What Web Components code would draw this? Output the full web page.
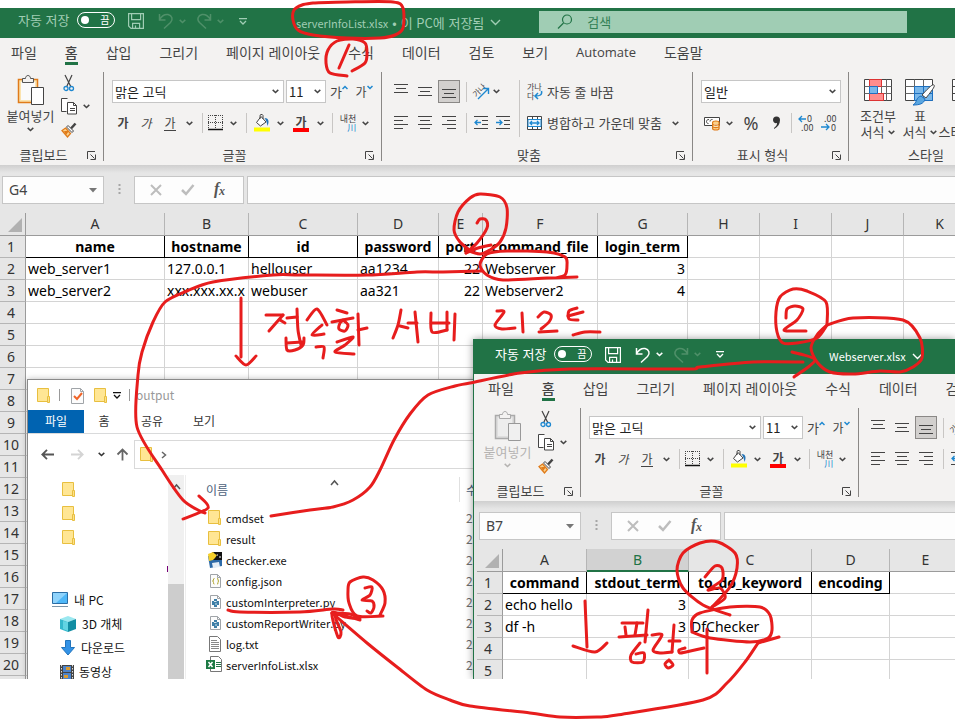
<!DOCTYPE html>
<html lang="ko">
<head>
<meta charset="utf-8">
<title>serverInfoList.xlsx</title>
<style>
html,body{margin:0;height:100%;background:#fff;overflow:hidden}
body{font:13px/16px "Noto Sans CJK KR","Noto Sans",sans-serif;color:#444}
</style>
</head>
<body>
<desk-stage>
  <excel-window inactive cell="G4" file="serverInfoList.xlsx" note="이 PC에 저장됨" search>
    <sheet-grid cols="139,84,109,81,44,115,90,72,72,72,72" rows="20" tail headed="7" data='[["name","hostname","id","password","port","command_file","login_term"],["web_server1","127.0.0.1","hellouser","aa1234",22,"Webserver",3],["web_server2","xxx.xxx.xx.x","webuser","aa321",22,"Webserver2",4]]'></sheet-grid>
  </excel-window>
  <file-explorer slot="explorer"></file-explorer>
  <excel-window slot="front" floating cell="B7" file="Webserver.xlsx">
    <sheet-grid cols="84,102,123,78,72,72" rows="5" headed="4" active="B" data='[["command","stdout_term","to_do_keyword","encoding"],["echo hello",3,"",""],["df -h",3,"DfChecker",""]]'></sheet-grid>
  </excel-window>
  <ink-layer slot="ink"></ink-layer>
</desk-stage>

<script>
const K = '#444', B = '#1e88d0';
const lines = (a) => a.map(([x1, x2, y]) => `<path d="M${x1} ${y}.5H${x2}" stroke="${K}"/>`).join('');
const FOLDER = '<path fill="#ffe694" stroke="#e8bf3f" d="M1.500 1.500h11v13h-11z"/><path fill="#fce08a" stroke="#e8bf3f" d="M11.500 9.500h2v6h-2z"/>';
const PAGE = '<path fill="#fcfcfc" stroke="#a0a4a8" d="M3.500 1.500h7l3 3v10h-10z"/><path fill="none" stroke="#a0a4a8" d="M10.500 1.500v3h3"/>';
const ICONS = {
  save: [16, 16, '<path fill="none" stroke="currentColor" stroke-width="1.200" d="M.6.6h14.800v14.800H3L.6 13zM3.600.6v6h9v-6M4.600 15.400v-5h7v5M7.500 15v-2.500"/>'],
  undo: [16, 16, '<path fill="none" stroke="currentColor" stroke-width="1.500" d="M1.500 1v6h6M1.500 6.500C4 2.500 7 1 10 1.500c4 1 5.500 5 2.500 8L6 15.500"/>'],
  redo: [16, 16, '<path fill="none" stroke="currentColor" stroke-width="1.500" d="M14.500 1v6h-6M14.500 6.500C12 2.500 9 1 6 1.500c-4 1-5.500 5-2.500 8L10 15.500"/>'],
  chev: [7, 5, '<path fill="none" stroke="currentColor" stroke-width="1.500" d="M.7.9l2.800 2.600L6.300.9"/>'],
  bigchev: [11, 7, '<path fill="none" stroke="currentColor" stroke-width="1.400" d="M1 1l4.500 4.500L10 1"/>'],
  more: [8, 7, '<path fill="none" stroke="currentColor" stroke-width="1.300" d="M0 .7h8M1 3l3 3 3-3"/>'],
  search: [16, 16, '<g fill="none" stroke="#217346" stroke-width="1.200"><circle cx="10" cy="5.500" r="4.500"/><path d="M6.500 9L1 14.500"/></g>'],
  paste: [28, 30, '<path d="M1.500 4.500h19v23h-19z" fill="#fbe3ae" stroke="#e07b1a" stroke-width="1.500"/><path fill="#fafafa" d="M4 7h14v18H4z"/><path fill="#f3f2f1" stroke="#555" d="M5.500 7.500v-4h3c0-4 5-4 5 0h3v4z"/><path fill="#fff" stroke="#444" d="M14.500 12.500h12v17h-12z"/>'],
  pastegray: [28, 30, '<path d="M1.500 4.500h19v23h-19z" fill="#dedede" stroke="#aaa" stroke-width="1.500"/><path fill="#ededed" d="M4 7h14v18H4z"/><path fill="#f3f2f1" stroke="#aaa" d="M5.500 7.500v-4h3c0-4 5-4 5 0h3v4z"/><path fill="#f0f0f0" stroke="#999" d="M14.500 12.500h12v17h-12z"/>'],
  cut: [12, 17, '<g fill="none"><path stroke="#444" stroke-width="1.200" d="M2 0l6 12M9 0L3.500 12"/><circle cx="3" cy="13.500" r="2" stroke="#1e88d0" stroke-width="1.300"/><circle cx="8.500" cy="13.500" r="2" stroke="#1e88d0" stroke-width="1.300"/></g>'],
  copy: [17, 17, '<g fill="#fff" stroke="#444"><path d="M6.500.5h-6v13h5"/><path d="M6.500 4.500h6l3 3v8.500h-9z"/><path fill="none" d="M12.500 4.500v3h3M9 10.500h5M9 12.500h5"/></g>'],
  brush: [16, 16, '<path d="M14.500 1.500L10 6.500" stroke="#444" stroke-width="2.500"/><path d="M7 3.500l5.500 5.500-1.500 1.500L5.500 5z" fill="#fff" stroke="#444"/><path d="M4.500 6l5 5.500-3 3.500L1 8.500z" fill="#fbd28a" stroke="#e07b1a" stroke-width="1.300"/><path d="M3 9l5 0-3 4" fill="#e07b1a"/>'],
  launch: [9, 9, '<path fill="none" stroke="#444" d="M.5 8V.5H8M3.500 3.500l4 4M8.500 3.500v5h-5"/>'],
  borders: [16, 16, '<path fill="none" stroke="#444" stroke-dasharray="1 1" d="M0 .5h15M.5 0v14M14.500 0v14M7.500 0v14M0 7.500h15"/><path stroke="#111" stroke-width="1.500" d="M0 14.500h15"/>'],
  fill: [16, 17, '<path fill="#fff" stroke="#444" d="M7 1.500l5 5.500-5.500 4L2.500 7.500z"/><path fill="none" stroke="#444" d="M6 4V1.500a1.500 1.500 0 013-1V4"/><path fill="#2475b8" d="M10.500 3c4 0 5 3 3 8-.5-3-1-5-3-8z"/><path fill="#ff0" d="M0 12.500h16v4H0z"/>'],
  top: [14, 16, lines([[0,14,0],[2,12,4],[0,14,8]])],
  mid: [14, 12, lines([[0,14,1],[2,12,5],[0,14,9]])],
  bot: [14, 8, lines([[0,14,1],[2,12,5],[0,14,9]])],
  left: [14, 14, lines([[0,14,0],[0,9,4],[0,14,8],[0,9,12]])],
  center: [14, 14, lines([[0,14,0],[2,12,4],[0,14,8],[2,12,12]])],
  right: [14, 14, lines([[0,14,0],[5,14,4],[0,14,8],[5,14,12]])],
  outdent: [14, 14, lines([[0,14,0],[8,14,4],[8,14,8],[0,14,12]]) + `<path fill="none" stroke="${B}" stroke-width="1.300" d="M7 6.500H1M3.500 4L1 6.500 3.500 9"/>`],
  indent: [14, 14, lines([[0,14,0],[8,14,4],[8,14,8],[0,14,12]]) + `<path fill="none" stroke="${B}" stroke-width="1.300" d="M0 6.500h6M3.500 4L6 6.500 3.500 9"/>`],
  orient: [17, 16, `<text x="0" y="10" font-size="8" fill="#444" transform="rotate(-45 6 8)">가나</text><path fill="none" stroke="${B}" stroke-width="1.400" d="M5 15L15 5M10 4.500h5.500V10"/>`],
  wrap: [16, 17, `<text x="0" y="7" font-size="8" fill="#444">가나</text><text x="0" y="16" font-size="8" fill="#444">다</text><path fill="none" stroke="${B}" stroke-width="1.500" d="M14.500 8c1 4-2 5-6 5M11 10l-3 3 3 3"/>`],
  merge: [16, 15, `<path fill="#fff" stroke="#444" d="M.5.5h14v13H.5z"/><path fill="none" stroke="#444" d="M5.500.5v3M10.500.5v3M5.500 10.500v3M10.500 10.500v3"/><path fill="#eaf4fc" stroke="${B}" d="M1 3.500h13v7H1z"/><path fill="none" stroke="${B}" stroke-width="1.300" d="M3 7h9M5 5L3 7l2 2M10 5l2 2-2 2"/>`],
  money: [17, 15, '<path fill="#fff" stroke="#444" d="M.5 1.500h15v8H.5z"/><path fill="none" stroke="#444" d="M5 3.500c-2 0-2.500 1-2.500 2s.5 2 2 2M8.500 3.500c-2 0-2.500 1-2.500 2"/><path fill="#fbd28a" stroke="#e07b1a" stroke-width="1.200" d="M8.600 6.500c0-2 6.500-2 6.500 0v6c0 2-6.500 2-6.500 0zM8.600 8c1 1.500 5.500 1.500 6.500 0M8.600 10.500c1 1.500 5.500 1.500 6.500 0"/>'],
  comma: [9, 14, '<path fill="#333" d="M1 4a3.500 3.500 0 017 0c0 4-2 7-6 9v-1c2-1.500 3-3 3-5C3 7.500 1 6.500 1 4z"/>'],
  incdec: [16, 17, `<text x="9" y="7" font-size="9" fill="#444">0</text><text x="3" y="16" font-size="9" fill="#444">.00</text><path fill="none" stroke="${B}" stroke-width="1.300" d="M8 4H1M4 1L1 4l3 3"/>`],
  decdec: [16, 17, `<text x="3" y="7" font-size="9" fill="#444">.00</text><text x="10" y="16" font-size="9" fill="#444">0</text><path fill="none" stroke="${B}" stroke-width="1.300" d="M0 12h8M5 9l3 3-3 3"/>`],
  cond: [28, 23, '<path fill="#fff" stroke="#444" d="M.5.5h27v21H.5z"/><path fill="none" stroke="#666" d="M5.500.5v21M17.500.5v21M22.500.5v21M.5 7.500h27M.5 14.500h27"/><path fill="#ff8d8d" stroke="#d33" d="M5.500.5h12v7h-12zM5.500 14.500h14v7h-14z"/><path fill="#7ab8ea" stroke="#1e70c0" d="M5.500 7.500h8v7h-8z"/>'],
  table: [30, 28, '<path fill="#fff" stroke="#444" d="M.5.5h27v21H.5z"/><path fill="none" stroke="#666" d="M9.500.5v21M18.500.5v21M.5 7.500h27M.5 14.500h27"/><path fill="#7ab8ea" stroke="#1e70c0" d="M9.500 7.500h18v14h-18zM18.500 7.500v14M9.500 14.500h18"/><path fill="#fff" stroke="#444" d="M29 6c1 1 0 3-8 13l-4-3C25 7 28 5 29 6z"/><path fill="#5aa6e0" stroke="#1e70c0" d="M16 17l4 3c-1 5-6 6-12 6 4-2 3-8 8-9z"/>'],
  cells: [20, 23, '<path fill="#fff" stroke="#444" d="M.5.5h27v21H.5zM.5 7.500h27M.5 14.500h27"/>'],
  tri: [8, 5, '<path fill="#777" d="M0 0h8L4 4.500z"/>'],
  dots: [3, 12, '<path fill="#a6a6a6" d="M.5 0h2v2h-2zM.5 4h2v2h-2zM.5 8h2v2h-2z"/>'],
  cross: [12, 12, '<path stroke="#bdbdbd" stroke-width="2" d="M1 1l10 10M11 1L1 11"/>'],
  check: [14, 12, '<path fill="none" stroke="#bdbdbd" stroke-width="2.500" d="M1 6l4 4 7.500-9"/>'],
  fx: [14, 16, '<text x="0" y="12" font-family="Liberation Serif,serif" font-style="italic" font-weight="700" font-size="16" fill="#555">f</text><text x="5" y="13" font-family="Liberation Serif,serif" font-style="italic" font-weight="700" font-size="12" fill="#555">x</text>'],
  folder: [15, 17, FOLDER],
  tick: [15, 17, PAGE.replace('M3.500 1.500h7l3 3v10h-10z', 'M1.500 1.500h9l3 3v12h-12z') + '<path fill="none" stroke="#f06428" stroke-width="2" d="M4 9l3 3 5-6"/>'],
  back: [13, 11, '<path fill="none" stroke="#555" stroke-width="1.800" d="M13 5.500H1M6 .8L1.300 5.500 6 10.200"/>'],
  fwd: [13, 11, '<path fill="none" stroke="#d4d4d4" stroke-width="1.800" d="M0 5.500h12M7 .8l4.700 4.700L7 10.200"/>'],
  up: [13, 13, '<path fill="none" stroke="#666" stroke-width="1.800" d="M6.500 12.500V1.500M1.500 6.500l5-5 5 5"/>'],
  gt: [6, 8, '<path fill="none" stroke="#666" stroke-width="1.500" d="M1 1l3.500 3L1 7"/>'],
  caret: [9, 6, '<path fill="none" stroke="#555" stroke-width="1.500" d="M1 5l3.500-4L8 5"/>'],
  pc: [17, 16, '<path fill="#4fb7f7" stroke="#2a6da5" d="M.5.5h15v11H.5z"/><path fill="#8fd3fb" d="M1 1h14L4 11H1z"/><path stroke="#7b94a8" d="M0 14.500h16"/>'],
  cube: [17, 16, '<path fill="#9be8f0" d="M8 0l8 3-8 3-8-3z"/><path fill="#35b8cc" d="M0 3l8 3v10l-8-3z"/><path fill="#128da3" d="M16 3L8 6v10l8-3z"/><path fill="#62d4e2" d="M3 5l5 1v9l-5-2z"/>'],
  down: [16, 16, '<path fill="#3392e6" stroke="#2275bd" d="M5.500.5h5v7h4L8 15 1.500 7.500h4z"/>'],
  film: [14, 15, '<path fill="#444" d="M0 0h14v15H0z"/><path fill="#4b83cb" d="M3 1h8v6H3zM3 8h8v7H3z"/><path fill="#d99b32" d="M6 2h4v3H6zM4 10h4v3H4z"/><path stroke="#ddd" stroke-dasharray="1.500 1.500" d="M1.500 0v15M12.500 0v15"/>'],
  exe: [16, 16, '<path fill="#2c6aa8" d="M1 4l14-3v13l-12 2z"/><path fill="#111" d="M5 0h10v8H5z"/><path fill="#f5cf2a" d="M1 2l5-2 2 2 2 1-2 3-2 2-4 1z"/><path fill="#e5eef6" d="M5 11l7-1 1 5-7 1z"/><path stroke="#fff" d="M10 3h1M12 5h2"/>'],
  json: [16, 16, PAGE + '<path fill="none" stroke="#b3a832" d="M7.500 5.500q-1.500 0-1 1.500 0 1-1 1 1 0 1 1.500-.5 1.500 1 1.500M10 5.500q1.500 0 1 1.500 0 1 1 1-1 0-1 1.500.5 1.500-1 1.500"/>'],
  py: [16, 16, PAGE + '<path fill="#3d7ea6" d="M7 5h3v2h2v4h-2v2H7v-2H5V7h2z"/><path stroke="#fff" stroke-width=".8" d="M7 7.500h2.500M8 10h2"/>'],
  txt: [16, 16, '<path fill="#fff" stroke="#777" d="M2.500.5h8l3 3v12h-11z"/><path stroke="#888" d="M4 4.500h6M4 6.500h8M4 8.500h8M4 10.500h8M4 12.500h8"/>'],
  xls: [17, 17, '<path fill="#fff" stroke="#777" d="M4.500.5h8l3 3v12h-11z"/><path stroke="#217346" d="M10 6.500h5M10 8.500h5M10 10.500h5"/><path fill="#1d7a44" d="M0 4h9v9H0z"/><path stroke="#fff" stroke-width="1.500" d="M2.500 6l4 5M6.500 6l-4 5"/>']
};
const define = (name, html, setup) => {
  const t = document.createElement('template');
  customElements.define(name, class extends HTMLElement {
    connectedCallback() {
      if (this.shadowRoot) return;
      const r = this.attachShadow({ mode: 'open' });
      t.innerHTML = typeof html === 'function' ? html(this) : html;
      r.append(t.content.cloneNode(true));
      if (setup) setup(this, r);
    }
  });
};
const ic = n => `<x-icon name="${n}"></x-icon>`;
const BTN = 'button{all:unset;box-sizing:border-box;display:flex;align-items:center;justify-content:center}';

define('x-icon', el => {
  const [w, h, b] = ICONS[el.getAttribute('name')];
  return `<style>:host{display:inline-flex;flex:none}svg{display:block;overflow:visible}</style><svg aria-hidden="true" width="${w}" height="${h}" viewBox="0 0 ${w} ${h}">${b.replace(/\.(\d)00/g, '.$1')}</svg>`;
});

define('desk-stage', `<style>
:host{display:block;position:relative;box-sizing:border-box;height:100vh;padding:8px 0 41px}
.area{height:100%;overflow:hidden}
.clip{position:absolute;inset:8px 0 41px;overflow:hidden}
::slotted(file-explorer){position:absolute;left:27px;top:371px;bottom:0;width:453px}
::slotted(excel-window[floating]){position:absolute;left:473px;right:0;top:331px;bottom:0}
::slotted(ink-layer){position:absolute;left:0;top:0}
</style><div class="area"><slot></slot></div><div class="clip"><slot name="explorer"></slot><slot name="front"></slot></div><slot name="ink"></slot>`);

define('excel-window', el => `<style>
:host{display:block;overflow:hidden;background:#e6e6e6;--fg:#fff;--dim:#4f9069;--undo:#fff;--h:35px;--pad:3px;--gap:100px}
:host([inactive]){--fg:#a0cdb4;--undo:#4f9069;--h:30px;--pad:0px;--gap:44px}
:host([floating]){border-left:1px solid #217346;box-shadow:0 0 8px #0006}
.body{padding-left:var(--pad)}
</style>
<title-bar file="${el.getAttribute('file')}" note="${el.getAttribute('note') || ''}" ${el.hasAttribute('search') ? 'search' : ''}></title-bar>
<excel-ribbon ${el.hasAttribute('floating') ? 'nopaste' : ''}></excel-ribbon>
<div class="body"><formula-bar cell="${el.getAttribute('cell')}"></formula-bar><slot></slot></div>`);

define('title-bar', el => `<style>
:host{display:flex;align-items:center;height:var(--h);box-sizing:border-box;padding:0 0 6px calc(var(--pad) + 18px);background:#217346;color:var(--fg);white-space:nowrap}
${BTN}
label,.tools,h1,button{flex:none}
label{display:flex;align-items:center;gap:8px;width:110px}
.pill{display:flex;align-items:center;justify-content:space-between;box-sizing:border-box;width:38px;height:16px;border:1px solid #fff;border-radius:8px;padding:0 5px 0 3px;font-size:10px;line-height:12px;color:#fff}
.pill input{appearance:none;margin:0;width:8px;height:8px;border-radius:50%;background:#fff}
.tools{display:grid;grid-template-columns:16px 10px 24px 8px 10px 16px 16px 6px 18px;align-items:center;justify-items:center;color:var(--undo);padding-top:2px}
.tools .l{color:var(--fg)}
.dim{color:var(--dim)}
h1{display:flex;margin:5px 6px 0 var(--gap);font:13px/16px "Noto Sans CJK KR",sans-serif}
h1 .f{font-size:11px}
h1 .n::before{content:"•";margin:0 4px}
.go{padding-top:5px}
.search{display:flex;align-items:center;gap:14px;flex:1;height:22px;margin:3px 48px 0 38px;padding-left:18px;background:#a0cdb4}
.search input{all:unset;flex:1;min-width:0;font:13px/20px "Noto Sans CJK KR",sans-serif;color:#217346}
.search input::placeholder{color:#217346;opacity:.85}
</style>
<label>자동 저장<span class="pill"><input type="checkbox" role="switch"><span>끔</span></span></label>
<div class="tools"><button class="l" aria-label="저장">${ic('save')}</button><span></span><button aria-label="실행 취소">${ic('undo')}</button><button aria-label="실행 취소 목록">${ic('chev')}</button><span></span><button class="dim" aria-label="다시 실행">${ic('redo')}</button><button class="dim" aria-label="다시 실행 목록">${ic('chev')}</button><span></span><button class="l" aria-label="사용자 지정">${ic('more')}</button></div>
<h1><span class="f">${el.getAttribute('file')}</span>${el.getAttribute('note') ? `<span class="n">${el.getAttribute('note')}</span>` : ''}</h1><button class="go" aria-label="파일 정보">${ic('bigchev')}</button>
${el.hasAttribute('search') ? `<div class="search">${ic('search')}<input type="search" aria-label="검색" placeholder="검색"></div>` : ''}`);

define('pick-list', el => `<style>
:host{display:grid;align-items:center;height:23px}
select,x-icon{grid-area:1/1}
x-icon{justify-self:end;margin-right:5px;color:#444;pointer-events:none}
select{appearance:none;width:100%;height:23px;border:1px solid #c6c6c6;border-radius:0;background:#fff;padding:0 0 0 2px;font:13px/20px "Noto Sans CJK KR",sans-serif;color:#222}
</style><select aria-label="${el.getAttribute('label')}"><option>${el.getAttribute('value')}</option></select>${ic('chev')}`);

define('ribbon-group', el => `<style>
:host{display:flex;flex-direction:column;justify-content:space-between;flex:none;height:89px;box-sizing:border-box;border-right:1px solid #8a8886}
:host([open]){border-right:0}
footer{display:grid;grid-template-columns:1fr 16px;align-items:center;text-align:center;font-size:13px;line-height:12px;height:12px;margin-top:auto}
:host([open]) footer{grid-template-columns:1fr}
</style><slot></slot><footer><span>${el.getAttribute('label')}</span>${el.hasAttribute('open') ? '' : ic('launch')}</footer>`);

define('excel-ribbon', el => {
  const no = el.hasAttribute('nopaste');
  return `<style>
:host{display:block;height:127px;box-sizing:border-box;padding-left:var(--pad);background:#f3f2f1;white-space:nowrap;overflow:hidden}
${BTN}
nav{display:flex;box-sizing:border-box;gap:28px;padding:5px 0 0 11px;font-size:14px;line-height:19px;height:28px}
nav a{color:#444;text-decoration:none;flex:none}
nav a.on{border-bottom:3px solid #217346;height:19px;font-weight:500}
nav a.en{font:13px/19px "Open Sans",sans-serif}
.groups{display:flex;padding-top:6px}
.clip{display:grid;grid-template-columns:61px 1fr;height:76px}
.paste{flex-direction:column;gap:3px;font-size:13px;line-height:16px;padding-top:3px;justify-content:flex-start;color:${no ? '#b5b3b1' : '#444'}}
.side{display:grid;grid-template-columns:16px 18px;grid-auto-rows:23px;align-items:center;justify-items:center;align-content:start}
.rows{display:grid;grid-template-rows:23px 28px;row-gap:6px;padding-top:8px}
.r{display:grid;align-items:center;justify-content:start;justify-items:center}
.r pick-list{width:100%}
i.s{width:1px;height:20px;background:#c8c6c4}
.b{font-weight:700}.it{font-style:italic}.un{border-bottom:1px solid #444;line-height:15px}
.fc{flex-direction:column;font-weight:700;line-height:13px;font-size:12px}.fc::after{content:"";width:16px;height:4px;background:red}
.sm{font-size:12px}
.ph{font-size:9px;line-height:9px;flex-direction:column}.ph span{color:#1e88d0;align-self:flex-end}
.sel{width:22px;height:23px;border:1px solid #8a8886;background:#d2d0ce}
.al{display:grid;grid-template-columns:137px 1fr}
.al .rows+.rows{border-left:1px solid #c8c6c4;height:57px;padding:0 0 0 7px;margin-top:8px;box-sizing:border-box}
.w{gap:4px;justify-content:flex-start}
.mg{display:flex;gap:10px}
.pct{font:18px/20px "Noto Sans",sans-serif}
.st{display:grid;grid-template-columns:42px 42px 42px;padding:7px 0 0 8px}
.st button{flex-direction:column;justify-content:flex-start;font-size:13px;line-height:16px}
.st button>x-icon{height:29px}
.st span{display:flex;align-items:center;gap:4px}
</style>
<nav>${['파일','홈','삽입','그리기','페이지 레이아웃','수식','데이터','검토','보기','Automate','도움말'].map(t => `<a href="#"${t === '홈' ? ' class="on"' : t === 'Automate' ? ' class="en"' : ''}>${t}</a>`).join('')}</nav>
<div class="groups">
<ribbon-group label="클립보드" style="width:104px"><div class="clip">
 <button class="paste">${ic(no ? 'pastegray' : 'paste')}붙여넣기${ic('chev')}</button>
 <div class="side"><button aria-label="잘라내기">${ic('cut')}</button><span></span><button aria-label="복사">${ic('copy')}</button><button aria-label="복사 목록">${ic('chev')}</button><button aria-label="서식 복사">${ic('brush')}</button></div></div></ribbon-group>
<ribbon-group label="글꼴" style="width:278px"><div class="rows" style="padding-left:8px">
 <div class="r" style="grid-template-columns:172px 2px 40px 26px 24px"><pick-list label="글꼴" value="맑은 고딕"></pick-list><span></span><pick-list label="글꼴 크기" value="11"></pick-list><button aria-label="글꼴 크게">가<svg width="6" height="14"><path d="M.5 4L3 1.500 5.500 4" fill="none" stroke="#1e88d0" stroke-width="1.500"/></svg></button><button class="sm" aria-label="글꼴 작게">가<svg width="6" height="14"><path d="M.5 1L3 3.500 5.500 1" fill="none" stroke="#1e88d0" stroke-width="1.500"/></svg></button></div>
 <div class="r" style="grid-template-columns:22px 24px 24px 14px 12px 16px 18px 8px 24px 12px 30px 8px 16px 16px 18px"><button class="b sm">가</button><button class="it sm">가</button><button class="un sm">가</button><button aria-label="밑줄 목록">${ic('chev')}</button><i class="s"></i><button aria-label="테두리">${ic('borders')}</button><button aria-label="테두리 목록">${ic('chev')}</button><i class="s"></i><button aria-label="채우기 색">${ic('fill')}</button><button aria-label="색 목록">${ic('chev')}</button><button class="fc">가</button><button aria-label="글꼴 색 목록">${ic('chev')}</button><i class="s"></i><button class="ph">내천<span>川</span></button><button aria-label="윗주 목록">${ic('chev')}</button></div></div></ribbon-group>
<ribbon-group label="맞춤" style="width:311px"><div class="al"><div class="rows" style="padding-left:7px">
 <div class="r" style="grid-template-columns:24px 24px 24px 10px 20px 10px"><button aria-label="위쪽 맞춤">${ic('top')}</button><button aria-label="가운데 맞춤">${ic('mid')}</button><button class="sel" aria-label="아래쪽 맞춤">${ic('bot')}</button><i class="s"></i><button aria-label="방향">${ic('orient')}</button><button aria-label="방향 목록">${ic('chev')}</button></div>
 <div class="r" style="grid-template-columns:24px 24px 24px 10px 20px 24px"><button aria-label="왼쪽">${ic('left')}</button><button aria-label="가운데">${ic('center')}</button><button aria-label="오른쪽">${ic('right')}</button><i class="s"></i><button aria-label="내어쓰기">${ic('outdent')}</button><button aria-label="들여쓰기">${ic('indent')}</button></div></div>
 <div class="rows"><button class="w">${ic('wrap')}자동 줄 바꿈</button><div class="mg"><button class="w">${ic('merge')}병합하고 가운데 맞춤</button><button aria-label="병합 목록">${ic('chev')}</button></div></div></div></ribbon-group>
<ribbon-group label="표시 형식" style="width:156px"><div class="rows" style="padding-left:8px">
 <div class="r" style="grid-template-columns:140px"><pick-list label="표시 형식" value="일반"></pick-list></div>
 <div class="r" style="grid-template-columns:22px 12px 32px 18px 12px 18px 28px"><button aria-label="통화">${ic('money')}</button><button aria-label="통화 목록">${ic('chev')}</button><button class="pct">%</button><button aria-label="쉼표">${ic('comma')}</button><i class="s"></i><button aria-label="자릿수 늘림">${ic('incdec')}</button><button aria-label="자릿수 줄임">${ic('decdec')}</button></div></div></ribbon-group>
<ribbon-group open label="스타일" style="width:154px"><div class="st"><button>${ic('cond')}조건부<span>서식${ic('chev')}</span></button><button>${ic('table')}표<span>서식${ic('chev')}</span></button><button>${ic('cells')}셀<span>스타일${ic('chev')}</span></button></div></ribbon-group>
</div>`; });

define('formula-bar', el => `<style>
:host{display:grid;grid-template-columns:102px 30px 110px 1fr;column-gap:0;padding:11px 0 9px 2px;height:28px;background:linear-gradient(#cfcfcf,#e6e6e6 8px);white-space:nowrap;align-items:center;justify-items:center;margin-left:calc(0px - var(--pad));padding-left:calc(var(--pad) + 2px)}
${BTN}
.box{box-sizing:border-box;display:flex;align-items:center;justify-self:stretch;height:28px;border:1px solid #c6c6c6;background:#fdfdfd}
input{all:unset;flex:1;min-width:0;padding-left:6px;font:14px/20px "Noto Sans",sans-serif;color:#444}
.n{padding-right:6px}.t{justify-content:space-around;padding:0 6px}
.f{margin-left:3px;border-right:0}
</style>
<div class="box n"><input aria-label="이름 상자" value="${el.getAttribute('cell')}">${ic('tri')}</div>${ic('dots')}
<div class="box t"><button aria-label="취소">${ic('cross')}</button><button aria-label="입력">${ic('check')}</button><button aria-label="함수 삽입">${ic('fx')}</button></div>
<div class="box f"><input aria-label="수식"></div>`);

define('sheet-grid', el => {
  const cols = el.getAttribute('cols').split(',').map(Number), data = JSON.parse(el.getAttribute('data'));
  const headed = +el.getAttribute('headed'), act = el.getAttribute('active');
  const total = cols.reduce((a, b) => a + b, 26);
  let rows = '';
  for (let r = 0; r < +el.getAttribute('rows'); r++) {
    rows += `<tr><th scope="row">${r + 1}</th>` + cols.map((_, c) => {
      const v = (data[r] || [])[c] ?? '';
      return `<td class="${r === 0 && c < headed ? 'h' : ''}${typeof v === 'number' ? 'n' : ''}">${v}</td>`;
    }).join('') + '</tr>';
  }
  if (el.hasAttribute('tail')) rows += `<tr><th></th>${cols.map(() => '<td></td>').join('')}</tr>`;
  return `<style>
:host{display:block;overflow:hidden;font:14px/20px "Noto Sans","Noto Sans CJK KR",sans-serif;color:#000}
table{table-layout:fixed;border-collapse:separate;border-spacing:0;width:${total}px}
th,td{box-sizing:border-box;padding:0 2px;height:22px;border:0 solid #d4d4d4;border-width:0 1px 1px 0;white-space:nowrap;overflow:hidden;line-height:20px}
td{background:#fff}
th{font-weight:400;background:#e6e6e6;color:#333}
thead th{height:23px;border-color:#9b9b9b;padding:0}
thead th:not(:first-child){border-right-color:#b5b5b5}
tbody th{padding:0 3px 0 0;border-color:#b5b5b5;border-right-color:#9b9b9b}
thead th.a{background:#d2d2d2;color:#217346;border-bottom:2px solid #217346}
.h{font-weight:700;text-align:center;border-color:#000}.n{text-align:right}
.corner{text-align:right;vertical-align:bottom}
.corner::after{content:"";display:block;width:14px;height:14px;margin:0 3px 3px auto;background:#b1b1b1;clip-path:polygon(100% 0,100% 100%,0 100%)}
</style><table><colgroup><col style="width:26px">${cols.map(w => `<col style="width:${w}px">`).join('')}</colgroup>
<thead><tr><th class="corner"></th>${cols.map((_, i) => { const l = String.fromCharCode(65 + i); return `<th scope="col"${l === act ? ' class="a"' : ''}>${l}</th>`; }).join('')}</tr></thead><tbody>${rows}</tbody></table>`; });

define('file-row', el => `<style>
:host{display:grid;grid-template-columns:17px 1fr 14px;column-gap:3px;align-items:center;justify-items:start;height:21px;font-size:11px;color:#111;white-space:nowrap}
x-icon{justify-self:center}
.d{color:#6d6d6d;font-size:12px}
</style>${ic(el.getAttribute('icon'))}<span><slot></slot></span><span class="d">2</span>`);

define('file-explorer', `<style>
:host{display:grid;grid-template-rows:30px 24px 41px 1fr;box-sizing:border-box;border:1px solid #8a8a8a;border-width:1px 0 0 1px;background:#fff;font:12px/16px "Noto Sans CJK KR",sans-serif;color:#333;overflow:hidden;box-shadow:0 0 6px #0004}
${BTN}
.top{display:grid;grid-template-columns:31px 1px 34px 12px 22px 3px 1fr;align-items:center;justify-items:center;color:#999;font-size:12px}
.top i{width:1px;height:12px;background:#999}
.top span{justify-self:start;padding-left:5px}
nav{display:grid;grid-template-columns:56px 40px 56px 48px;border-bottom:1px solid #d9dadb;text-align:center;line-height:22px}
nav a{color:#333;text-decoration:none}
nav a.on{background:#0063b1;color:#fff}
.nav{display:grid;grid-template-columns:38px 22px 26px 16px 4px 1fr;align-items:center;justify-items:center}
.addr{justify-self:stretch;height:27px;border:1px solid #d9d9d9;border-right:0;display:flex;align-items:center;gap:7px;padding-left:4px}
.main{display:grid;grid-template-columns:140px 16px 2px 1fr;min-height:0;overflow:hidden}
.tree{display:grid;grid-template-rows:24px 24px 24px 39px;grid-auto-rows:24px;align-content:start;align-items:center;padding-top:2px}
.tree div{display:flex;align-items:center;gap:5px;padding-left:32px;color:#111;font-size:12px}
.tree .f{padding-left:33px}.tree .pc{padding-left:24px}
.tree .gap{padding:0;height:39px;align-items:center;justify-content:flex-end}
.gap i{width:1px;height:6px;background:#707}
.bar{background:#f0f0f0;display:flex;flex-direction:column;align-items:center}
.bar x-icon{padding-top:9px;height:100px}
.bar i{width:100%;flex:1;background:#cdcdcd}
.line{border-right:1px solid #eee}
.list{display:grid;grid-template-rows:32px repeat(8,21px);padding-left:20px}
.head{display:grid;grid-template-columns:1fr 1px 14px;align-items:center;height:25px;margin-top:2px;color:#4c607a;column-gap:6px}
.head i{height:25px;background:#e0e0e0}
.head b{font-weight:400;display:grid;grid-template-columns:1fr 1fr}
.head x-icon{align-self:start;margin-top:-2px}
</style>
<div class="top">${ic('folder')}<i></i>${ic('tick')}${ic('folder')}<button aria-label="도구 모음" style="color:#111">${ic('more')}</button><i></i><span>output</span></div>
<nav><a class="on" href="#">파일</a><a href="#">홈</a><a href="#">공유</a><a href="#">보기</a></nav>
<div class="nav"><button aria-label="뒤로">${ic('back')}</button><button aria-label="앞으로">${ic('fwd')}</button><button aria-label="최근 위치">${ic('chev')}</button><button aria-label="위로">${ic('up')}</button><span></span><div class="addr">${ic('folder')}${ic('gt')}</div></div>
<div class="main"><div class="tree"><div class="f">${ic('folder')}</div><div class="f">${ic('folder')}</div><div class="f">${ic('folder')}</div><div class="gap"><i></i></div><div class="pc">${ic('pc')}내 PC</div><div>${ic('cube')}3D 개체</div><div>${ic('down')}다운로드</div><div>${ic('film')}동영상</div></div>
<div class="bar">${ic('caret')}<i></i></div><div class="line"></div>
<div class="list"><div class="head"><b>이름${ic('caret')}</b><i></i><span>수</span></div>
<file-row icon="folder">cmdset</file-row><file-row icon="folder">result</file-row><file-row icon="exe">checker.exe</file-row><file-row icon="json">config.json</file-row><file-row icon="py">customInterpreter.py</file-row><file-row icon="py">customReportWriter.py</file-row><file-row icon="txt">log.txt</file-row><file-row icon="xls">serverInfoList.xlsx</file-row></div></div>`);

/* Pen strokes: one list of x,y points each, joined by a smooth curve. */
const STROKES = [
'313,3 347,2 393,2 403,8 403,28 395,35 380,38 347,38 313,35 298,30 293,20 294,10 302,5 313,3',
'352,71 365,63 367,53 365,43 353,39 337,41 328,50 326,63 330,73 347,76','349,45 339,68',
'466,250 480,254 490,250 500,242 506,228 507,208 500,197 480,194 470,198 458,212 454,230 460,242 472,252','477,223 480,219 486,220 487,228 477,243 466,253','466,253 478,248 491,245',
'577,277 547,278 503,280 487,275 480,265 487,254 507,251 547,252 565,257 567,265 565,275 555,278',
'482,271 443,272 417,272 367,275 300,275 273,275 213,282 187,291 165,302 153,322 142,352 138,375 137,427 162,470 183,500 200,511 205,513','199,496 208,508 183,519',
'241,298 241,357','236,356 246,365 256,356',
'266,315 283,315','283,315 269,331','280,320 285,323','297,309 298,330 301,345','287,318 297,317','286,338 287,350 295,350 303,345 304,338','287,343 302,342',
'307,320 317,309 327,325','322,325 312,335 324,334','316,347 324,347 323,358',
'337,310 347,313','332,322 353,318','343,320 348,325 345,331 339,329 340,323 343,320','358,314 359,345','358,330 367,328','337,342 353,337 345,345 335,352 354,354',
'401,310 398,325 393,338','400,326 408,328','408,323 417,323','415,312 418,342',
'431,313 432,332 447,330','447,312 447,330','432,323 449,323','455,314 454,340',
'497,311 504,312 495,325 502,329 515,328','522,313 523,332','538,317 544,312 551,315 549,322 541,329','539,332 557,331','577,308 569,311 569,319 578,320','583,312 568,316','573,335 585,332 600,332',
'827,325 826,302 807,291 793,289 780,297 776,312 777,332 783,343 797,343 817,338 827,325','786,318 787,309 795,306 803,309 797,320 784,330 795,331 806,331',
'827,325 853,318 903,320 920,338 922,358 913,367 900,372 880,371 853,374 830,372 817,362 811,348 817,335 827,325',
'271,516 310,510 333,507 353,500 370,487 380,470 394,440 410,414 428,395 455,386 470,383 520,373 570,369 687,369 700,367 753,362 803,362','792,352 815,360 794,377',
'380,615 385,603 383,590 373,580 363,577 350,582 348,590 349,603 357,616 383,616','365,588 372,587 370,595 362,600 372,601 374,607 371,613 367,611',
'228,610 240,612 300,612 333,609 343,610','360,619 345,617 332,613 338,637 341,632 336,615 360,620','332,613 350,614 358,618','332,613 367,643 397,667 427,690 450,700 470,706 530,713 560,717 597,717 617,715 703,700 727,683 745,662 758,643',
'730,615 703,605 683,588 677,570 683,553 700,543 718,542 735,553 737,568 730,587 712,607','705,577 715,566 722,568 722,580 708,590 720,588 725,598 712,607',
'692,632 692,620 700,613 730,607 760,607 770,615 772,630 768,638 750,642 710,638 692,632','758,643 779,637',
'585,601 587,647','573,646 595,652 607,643',
'622,623 643,623','625,627 626,635','637,623 635,635','619,637 647,635','648,610 645,642','640,643 631,655 632,662 643,662 644,653 636,654',
'652,635 662,635 653,650 661,653 672,652','674,625 672,652','669,641 680,641','669,660 673,665 668,668 665,664 669,660','685,648 679,650 680,653 686,652 704,648','707,629 707,673'];
define('ink-layer', () => {
  const path = s => {
    const p = s.split(' ').map(q => q.split(',').map(Number));
    let d = `M${p[0]}`;
    for (let i = 0; i < p.length - 1; i++) {
      const a = p[i - 1] || p[i], b = p[i], c = p[i + 1], e = p[i + 2] || c;
      d += `C${b[0] + (c[0] - a[0]) / 7},${b[1] + (c[1] - a[1]) / 7} ${c[0] - (e[0] - b[0]) / 7},${c[1] - (e[1] - b[1]) / 7} ${c}`;
    }
    return `<path d="${d}"/>`;
  };
  return `<style>:host{display:block;pointer-events:none}svg{display:block}</style><svg width="955" height="720" role="img" aria-label="손글씨 표시" fill="none" stroke="#e71d1d" stroke-width="3" stroke-linecap="round" stroke-linejoin="round">${STROKES.map(path).join('')}</svg>`;
});
</script>
</body>
</html>
